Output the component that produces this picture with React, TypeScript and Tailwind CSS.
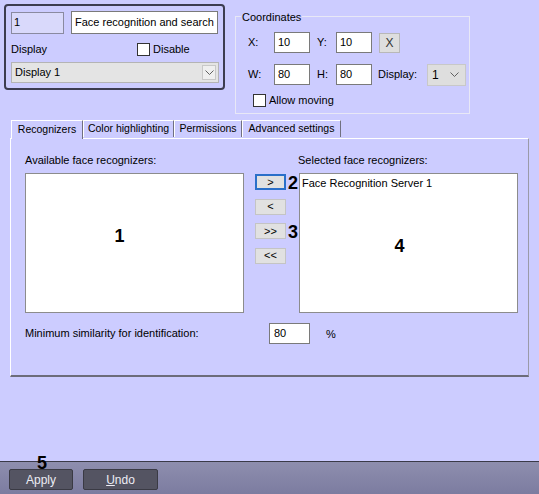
import React from "react";

const Chevron = ({ className = "" }: { className?: string }) => (
  <svg width="9" height="6" viewBox="0 0 9 6" className={className}>
    <path d="M0.5 0.5 L4.5 4.5 L8.5 0.5" fill="none" stroke="#606060" strokeWidth="1" />
  </svg>
);

const Checkbox = () => (
  <div className="w-[13px] h-[13px] bg-white border border-[#333333]" />
);

const Num = ({ v, className = "" }: { v: string; className?: string }) => (
  <span className={`font-bold text-[18px] leading-none text-black ${className}`}>{v}</span>
);

const SmallInput = ({ v, w = "w-[36px]" }: { v: string; w?: string }) => (
  <div className={`${w} h-[21px] bg-white border border-[#7a7a7a] flex items-center pl-[3px] text-[11px] text-black`}>
    {v}
  </div>
);

const MoveBtn = ({ label, focused = false }: { label: string; focused?: boolean }) => (
  <div
    className={`w-[31px] h-[16px] bg-[#e1e1e1] flex items-center justify-center text-[11px] text-black ${
      focused ? "border-2 border-[#2a6fc9]" : "border border-[#c4c4c4]"
    }`}
  >
    {label}
  </div>
);

export default function App() {
  return (
    <div
      className="w-[539px] h-[494px] bg-[#ccccff] flex flex-col overflow-hidden text-black relative"
      style={{ fontFamily: '"Liberation Sans", Arial, sans-serif' }}
    >
      {/* Top area */}
      <div className="flex h-[115px] text-[11px]">
        {/* Left panel */}
        <div className="ml-[4px] mt-[4px] w-[221px] h-[86px] border-2 border-[#3c3c50] rounded-[4px] flex flex-col pl-[5px] pr-[4px] pt-[5px]">
          <div className="flex items-center">
            <div className="w-[53px] h-[22px] bg-[#d9d9fb] border border-[#8a8aa0] flex items-center pl-[2px]">
              1
            </div>
            <div className="ml-[7px] w-[147px] h-[23px] bg-white border border-[#7a7a7a] flex items-center pl-[3px] whitespace-nowrap overflow-hidden">
              Face recognition and search 1
            </div>
          </div>
          <div className="flex items-center mt-[8px] h-[15px]">
            <span className="w-[126px]">Display</span>
            <Checkbox />
            <span className="ml-[3px]">Disable</span>
          </div>
          <div className="mt-[5px] w-[208px] h-[21px] bg-[#e4e4e4] border border-[#b4b4b4] flex items-center pl-[3px] pr-[2px]">
            <span className="flex-1">Display 1</span>
            <div className="w-[14px] h-[15px] bg-[#efefef] border border-[#c8c8c8] flex items-center justify-center">
              <Chevron />
            </div>
          </div>
        </div>

        {/* Coordinates */}
        <div className="ml-[10px] mt-[11px] w-[235px] h-[103px] relative">
          <div className="absolute left-0 right-0 top-[5px] bottom-0 border border-[#e8e8f6]" />
          <span className="absolute left-[6px] top-0 bg-[#ccccff] px-[1px] leading-[12px]">
            Coordinates
          </span>
          <div className="relative flex flex-col pt-[21px] pl-[13px]">
            <div className="flex items-center h-[21px]">
              <span className="w-[26px]">X:</span>
              <SmallInput v="10" />
              <span className="ml-[7px] w-[19px]">Y:</span>
              <SmallInput v="10" />
              <div className="ml-[7px] w-[21px] h-[20px] bg-[#dedede] border border-[#b8b8b8] flex items-center justify-center text-[12px] text-[#333]">
                X
              </div>
            </div>
            <div className="flex items-center h-[21px] mt-[11px]">
              <span className="w-[26px]">W:</span>
              <SmallInput v="80" />
              <span className="ml-[7px] w-[19px]">H:</span>
              <SmallInput v="80" />
              <span className="ml-[6px] w-[49px]">Display:</span>
              <div className="w-[39px] h-[22px] bg-[#dedede] border border-[#c8c8c8] flex items-center pl-[4px] pr-[6px] text-[12px]">
                <span className="flex-1">1</span>
                <Chevron />
              </div>
            </div>
            <div className="flex items-center mt-[7px] ml-[5px]">
              <Checkbox />
              <span className="ml-[3px]">Allow moving</span>
            </div>
          </div>
        </div>
      </div>

      {/* Tabs */}
      <div className="flex items-end h-[19px] ml-[11px] mt-[4px] text-[10.5px] relative z-10">
        <div className="w-[72px] h-[19px] bg-[#ccccff] border-t border-l border-white border-r border-r-[#707080] flex items-center justify-center -mb-[1px] pb-[1px]">
          Recognizers
        </div>
        <div className="w-[91px] h-[17px] border-t border-l border-white border-r border-r-[#707080] flex items-center justify-center mb-[1px]">
          Color highlighting
        </div>
        <div className="w-[68px] h-[17px] border-t border-l border-white border-r border-r-[#707080] flex items-center justify-center mb-[1px]">
          Permissions
        </div>
        <div className="w-[99px] h-[17px] border-t border-l border-white border-r border-r-[#707080] flex items-center justify-center mb-[1px]">
          Advanced settings
        </div>
      </div>

      {/* Tab panel */}
      <div className="ml-[10px] w-[519px] h-[239px] border-t border-l border-white border-b-2 border-b-[#6c6c7a] border-r border-r-[#9a9aa8] flex flex-col pl-[14px] pt-[13px] text-[11px]">
        <div className="flex">
          <span className="w-[273px]">Available face recognizers:</span>
          <span>Selected face recognizers:</span>
        </div>
        <div className="flex mt-[4px]">
          <div className="w-[219px] h-[140px] bg-white border border-[#8c8c8c] flex items-center justify-center">
            <Num v="1" className="mt-[-14px] ml-[-30px]" />
          </div>
          <div className="ml-[11px] w-[44px] flex flex-col gap-[7px] relative">
            <div className="flex items-center">
              <MoveBtn label=">" focused />
              <Num v="2" className="ml-[2px] mt-[1px]" />
            </div>
            <MoveBtn label="<" />
            <div className="flex items-center">
              <MoveBtn label=">>" />
              <Num v="3" className="ml-[2px] mt-[1px]" />
            </div>
            <MoveBtn label="<<" />
          </div>
          <div className="w-[219px] h-[140px] bg-white border border-[#8c8c8c] flex flex-col pl-[2px] pt-[1px]">
            <span>Face Recognition Server 1</span>
            <div className="flex-1 flex items-center justify-center">
              <Num v="4" className="mt-[-10px] ml-[-20px]" />
            </div>
          </div>
        </div>
        <div className="flex items-center mt-[10px]">
          <span className="w-[244px]">Minimum similarity for identification:</span>
          <div className="w-[41px] h-[21px] bg-white border border-[#7a7a7a] flex items-center pl-[4px]">80</div>
          <span className="ml-[16px] mt-[2px]">%</span>
        </div>
      </div>

      <div className="flex-1" />

      {/* Bottom bar */}
      <div className="h-[33px] border-t border-[#3a3a48] bg-gradient-to-b from-[#8e8eae] to-[#7c7ca0] flex items-center pl-[9px] gap-[10px] relative">
        <Num v="5" className="absolute left-[37px] top-[-8px]" />
        <div className="w-[64px] h-[21px] bg-[#545462] border border-[#3a3a44] rounded-[2px] flex items-center justify-center text-[12px] text-[#ececf4] mt-[3px]">
          Apply
        </div>
        <div className="w-[75px] h-[21px] bg-[#545462] border border-[#3a3a44] rounded-[2px] flex items-center justify-center text-[12px] text-[#ececf4] mt-[3px]">
          <span className="underline">U</span>ndo
        </div>
      </div>
    </div>
  );
}
